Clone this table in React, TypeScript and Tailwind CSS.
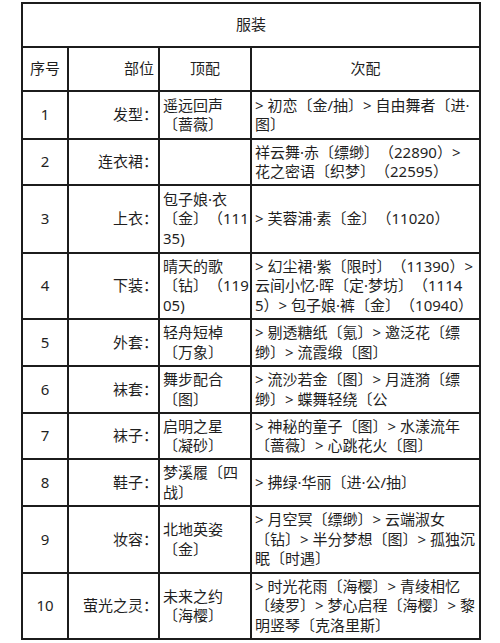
const rows: [string, string, string, string, string][] = [
  ['1', '发型：', '遥远回声〔蔷薇〕', '> 初恋〔金/抽〕> 自由舞者〔进·图〕', 'h-[48px]'],
  ['2', '连衣裙：', '', '祥云舞·赤〔缥缈〕（22890）> 花之密语〔织梦〕（22595）', 'h-[46px]'],
  ['3', '上衣：', '包子娘·衣〔金〕（11135)', '> 芙蓉浦·素〔金〕（11020）', 'h-[68px]'],
  ['4', '下装：', '晴天的歌〔钻〕（11905)', '> 幻尘裙·紫〔限时〕（11390）> 云间小忆·晖〔定·梦坊〕（11145）> 包子娘·裤〔金〕（10940）', 'h-[66px]'],
  ['5', '外套：', '轻舟短棹〔万象〕', '> 剔透糖纸〔氪〕> 邀泛花〔缥缈〕> 流霞缎〔图〕', 'h-[47px]'],
  ['6', '袜套：', '舞步配合〔图〕', '> 流沙若金〔图〕> 月涟漪〔缥缈〕> 蝶舞轻绕〔公', 'h-[47px]'],
  ['7', '袜子：', '启明之星〔凝砂〕', '> 神秘的童子〔图〕> 水漾流年〔蔷薇〕> 心跳花火〔图〕', 'h-[46px]'],
  ['8', '鞋子：', '梦溪履〔四战〕', '> 拂绿·华丽〔进·公/抽〕', 'h-[47px]'],
  ['9', '妆容：', '北地英姿〔金〕', '> 月空冥〔缥缈〕> 云端淑女〔钻〕> 半分梦想〔图〕> 孤独沉眠〔时遇〕', 'h-[67px]'],
  ['10', '萤光之灵：', '未来之约〔海樱〕', '> 时光花雨〔海樱〕> 青绫相忆〔绫罗〕> 梦心启程〔海樱〕> 黎明竖琴〔克洛里斯〕', 'h-[66px]'],
];

const cell = 'border-2 border-[#1c1c1c] p-0 align-middle';

export default function App() {
  return (
    <div className="w-[500px] h-[643px] bg-white pt-[2px] pl-[21px] text-[15px] leading-[19.5px] text-[#1f1f1f] [font-family:'Noto_Sans','Noto_Sans_CJK_SC',sans-serif] [text-spacing-trim:space-all]">
      <table className="table-fixed border-collapse w-[458px] break-all">
        <colgroup>
          <col className="w-[46px]" />
          <col className="w-[91px]" />
          <col className="w-[92px]" />
          <col className="w-[229px]" />
        </colgroup>
        <thead>
          <tr className="h-[44px]">
            <th colSpan={4} className={`${cell} text-center font-normal`}>
              服装
            </th>
          </tr>
          <tr className="h-[44px]">
            <th className={`${cell} text-center font-normal`}>序号</th>
            <th className={`${cell} text-right pr-[4px] font-normal`}>部位</th>
            <th className={`${cell} text-center font-normal`}>顶配</th>
            <th className={`${cell} text-center font-normal`}>次配</th>
          </tr>
        </thead>
        <tbody>
          {rows.map(([no, part, top, second, h]) => (
            <tr key={no} className={h}>
              <td className={`${cell} text-center`}>{no}</td>
              <td className={`${cell} text-right`}>{part}</td>
              <td className={`${cell} pl-[3px] pr-[1px]`}>{top}</td>
              <td className={`${cell} pl-[3px] pr-[2px]`}>{second}</td>
            </tr>
          ))}
        </tbody>
      </table>
    </div>
  );
}
